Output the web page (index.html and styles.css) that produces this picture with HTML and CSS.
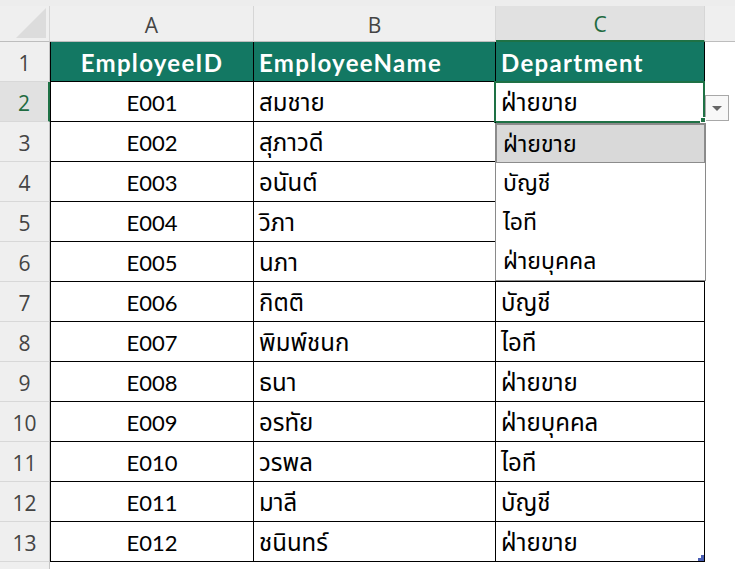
FILE: index.html
```html
<!DOCTYPE html>
<html lang="th">
<head>
<meta charset="utf-8">
<title>Sheet</title>
<link rel="stylesheet" href="styles.css">
</head>
<body>
<div class="sheet">
  <div class="topstrip"></div>

  <div class="corner"><span class="tri"></span></div>
  <div class="colhead">A</div>
  <div class="colhead">B</div>
  <div class="colhead sel">C</div>
  <div class="colhead rest"></div>

  <div class="rowhead">1</div>
  <div class="cell hd ca">EmployeeID</div>
  <div class="cell hd">EmployeeName</div>
  <div class="cell hd">Department</div>
  <div class="blank"></div>

  <div class="rowhead sel">2</div>
  <div class="cell ca">E001</div>
  <div class="cell th">สมชาย</div>
  <div class="cell th active">ฝ่ายขาย
    <span class="handle"></span>
    <span class="ddbtn"><span class="arrow"></span></span>
    <div class="ddlist">
      <div class="dditem on">ฝ่ายขาย</div>
      <div class="dditem">บัญชี</div>
      <div class="dditem">ไอที</div>
      <div class="dditem">ฝ่ายบุคคล</div>
    </div>
  </div>
  <div class="blank"></div>

  <div class="rowhead">3</div>
  <div class="cell ca">E002</div>
  <div class="cell th">สุภาวดี</div>
  <div class="cell th"></div>
  <div class="blank"></div>

  <div class="rowhead">4</div>
  <div class="cell ca">E003</div>
  <div class="cell th">อนันต์</div>
  <div class="cell th"></div>
  <div class="blank"></div>

  <div class="rowhead">5</div>
  <div class="cell ca">E004</div>
  <div class="cell th">วิภา</div>
  <div class="cell th"></div>
  <div class="blank"></div>

  <div class="rowhead">6</div>
  <div class="cell ca">E005</div>
  <div class="cell th">นภา</div>
  <div class="cell th"></div>
  <div class="blank"></div>

  <div class="rowhead">7</div>
  <div class="cell ca">E006</div>
  <div class="cell th">กิตติ</div>
  <div class="cell th">บัญชี</div>
  <div class="blank"></div>

  <div class="rowhead">8</div>
  <div class="cell ca">E007</div>
  <div class="cell th">พิมพ์ชนก</div>
  <div class="cell th">ไอที</div>
  <div class="blank"></div>

  <div class="rowhead">9</div>
  <div class="cell ca">E008</div>
  <div class="cell th">ธนา</div>
  <div class="cell th">ฝ่ายขาย</div>
  <div class="blank"></div>

  <div class="rowhead">10</div>
  <div class="cell ca">E009</div>
  <div class="cell th">อรทัย</div>
  <div class="cell th">ฝ่ายบุคคล</div>
  <div class="blank"></div>

  <div class="rowhead">11</div>
  <div class="cell ca">E010</div>
  <div class="cell th">วรพล</div>
  <div class="cell th">ไอที</div>
  <div class="blank"></div>

  <div class="rowhead">12</div>
  <div class="cell ca">E011</div>
  <div class="cell th">มาลี</div>
  <div class="cell th">บัญชี</div>
  <div class="blank"></div>

  <div class="rowhead">13</div>
  <div class="cell ca">E012</div>
  <div class="cell th">ชนินทร์</div>
  <div class="cell th">ฝ่ายขาย<span class="resize"></span></div>
  <div class="blank"></div>

  <div class="rowhead tail"></div>
  <div class="blank"></div>
  <div class="blank"></div>
  <div class="blank"></div>
  <div class="blank"></div>
</div>
</body>
</html>
```

FILE: styles.css
```css
* { box-sizing: border-box; }
html, body { margin: 0; padding: 0; background: #ffffff; }
body { width: 735px; height: 569px; overflow: hidden; }

.sheet {
  display: grid;
  grid-template-columns: 50px 204px 242px 209px 1fr;
  grid-template-rows: 6px 36px repeat(13, 40px) 1fr;
  height: 569px;
  font-family: Lato, "Noto Sans Thai", Tahoma, "DejaVu Sans", sans-serif;
  font-size: 24px;
  color: #000;
}

.topstrip {
  grid-column: 1 / -1;
  background: #ededed;
}

.corner {
  background: #efefef;
  border-right: 1px solid #d6d6d6;
  border-bottom: 1px solid #bdbdbd;
  position: relative;
}
.corner .tri {
  position: absolute;
  right: 3px;
  bottom: 3px;
  width: 30px;
  height: 30px;
  background: #dcdcdc;
  clip-path: polygon(100% 0, 100% 100%, 0 100%);
}

.colhead {
  background: #efefef;
  border-right: 1px solid #d6d6d6;
  border-bottom: 1px solid #bdbdbd;
  display: flex;
  align-items: center;
  justify-content: center;
  font-family: "Open Sans", "Noto Sans", sans-serif;
  font-size: 21px;
  color: #444;
  padding-top: 2px;
}
.colhead.sel {
  background: #e1e1e1;
  color: #1f6b40;
  border-bottom: 2px solid #1e7145;
}
.colhead.rest { border-right: none; }

.rowhead {
  background: #efefef;
  border-bottom: 1px solid #d8d8d8;
  border-right: 1px solid #c4c4c4;
  display: flex;
  align-items: center;
  justify-content: center;
  font-family: "Open Sans", "Noto Sans", sans-serif;
  font-size: 21px;
  color: #444;
  padding-top: 3px;
}
.rowhead.sel {
  background: #e1e1e1;
  color: #1f6b40;
  border-right: 2px solid #1e7145;
}
.rowhead.tail { border-bottom: none; }

.cell {
  border-right: 1px solid #000;
  border-bottom: 1px solid #000;
  display: flex;
  align-items: center;
  padding: 1px 5px 0 5px;
  white-space: nowrap;
  position: relative;
}
.cell.th { padding-top: 5px; }
.cell.ca {
  border-left: 1px solid #000;
  justify-content: center;
  font-size: 22px;
}
.cell.hd {
  background: #137863;
  color: #fff;
  font-weight: 700;
  font-size: 24px;
  letter-spacing: 1.3px;
  padding-top: 1px;
}

.blank { background: #fff; }

.cell.active::after {
  content: "";
  position: absolute;
  top: -1px;
  left: -2px;
  right: -1px;
  bottom: -2px;
  border: 2px solid #1e7145;
  pointer-events: none;
}
.handle {
  position: absolute;
  right: -2px;
  bottom: -2px;
  width: 6px;
  height: 6px;
  background: #1e7145;
  border: 1px solid #fff;
  z-index: 3;
}

.ddbtn {
  position: absolute;
  left: 100%;
  top: 13px;
  margin-left: 1px;
  width: 24px;
  height: 26px;
  background: #f8f8f8;
  border: 1px solid #a8a8a8;
  display: flex;
  align-items: center;
  justify-content: center;
}
.arrow {
  width: 0;
  height: 0;
  border-left: 5px solid transparent;
  border-right: 5px solid transparent;
  border-top: 5px solid #666;
}

.ddlist {
  position: absolute;
  left: -1px;
  top: 41px;
  width: 211px;
  height: 158px;
  background: #fff;
  border: 1px solid #8a8a8a;
  z-index: 2;
  font-family: "Noto Sans Thai", Tahoma, "DejaVu Sans", sans-serif;
  font-size: 23px;
}
.dditem {
  height: 39px;
  display: flex;
  align-items: center;
  padding: 2px 6px 0 6px;
  border: 1px solid transparent;
}
.dditem.on {
  background: #d9d9d9;
  border-color: #8c8c8c;
}

.resize {
  position: absolute;
  right: 0;
  bottom: 0;
  width: 6px;
  height: 6px;
  background: #4a5fb4;
  clip-path: polygon(50% 0, 100% 0, 100% 100%, 0 100%, 0 50%, 50% 50%);
}
```
